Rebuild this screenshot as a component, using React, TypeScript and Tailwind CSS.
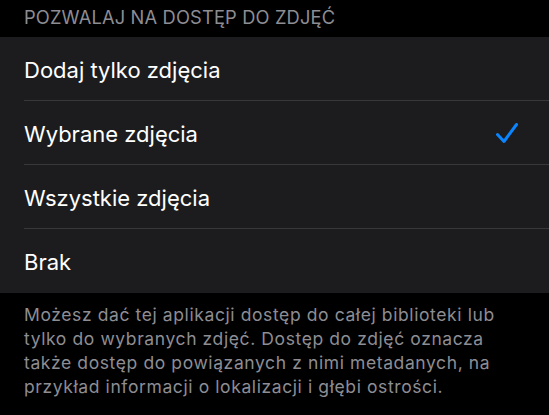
const options = ["Dodaj tylko zdjęcia", "Wybrane zdjęcia", "Wszystkie zdjęcia", "Brak"];

const Check = () => (
  <svg width="24" height="22" viewBox="0 0 24 22" fill="none">
    <path d="M2.5 12.5 L9 19.5 L21.5 2.5" stroke="#0a84ff" strokeWidth="3" strokeLinecap="round" strokeLinejoin="round" />
  </svg>
);

export default function App() {
  return (
    <div className="w-[549px] h-[415px] bg-black overflow-hidden" style={{ fontFamily: "Inter, 'Noto Sans', sans-serif" }}>
      <div className="h-[37px] pl-6 pt-[6px] text-[18.3px] leading-[22px] tracking-[0.15px] text-[#8d8d93]">
        POZWALAJ NA DOSTĘP DO ZDJĘĆ
      </div>
      <div className="bg-[#1c1c1e]">
        {options.map((label, i) => (
          <div key={label} className="pl-6">
            <div className={`h-[64px] flex items-center justify-between pr-[30px] ${i < options.length - 1 ? "border-b border-[#38383a]" : ""}`}>
              <span className="text-[22px] text-white pt-[3px]">{label}</span>
              {i === 1 && <Check />}
            </div>
          </div>
        ))}
      </div>
      <div className="pl-6 pr-6 pt-[10px] text-[17.5px] leading-[24px] tracking-[0.6px] text-[#8d8d93]">
        Możesz dać tej aplikacji dostęp do całej biblioteki lub tylko do wybranych zdjęć. Dostęp do zdjęć oznacza także dostęp do powiązanych z nimi metadanych, na przykład informacji o lokalizacji i głębi ostrości.
      </div>
    </div>
  );
}
